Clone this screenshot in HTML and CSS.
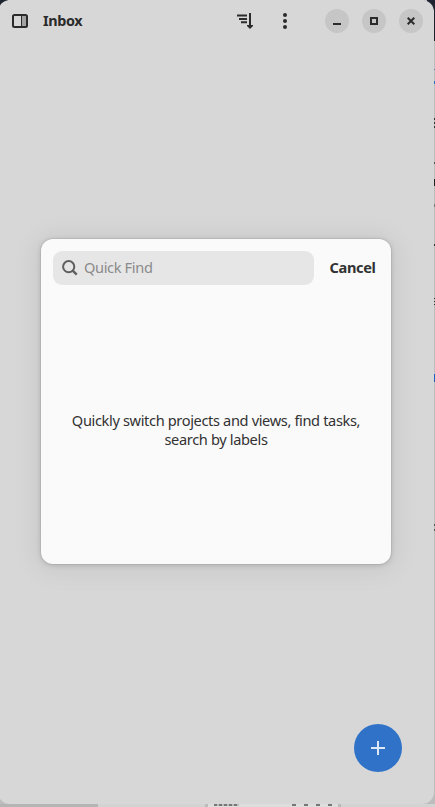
FILE: index.html
```
<!DOCTYPE html>
<html lang="en">
  <head>
    <title>Inbox</title>
    <meta charset="UTF-8">
    <meta name="viewport" content="width=device-width, initial-scale=1.0">
    <link rel="stylesheet" href="styles.css">
  </head>

  <body>
    <div class="window">
      <header class="headerbar">
        <button class="icon-button" aria-label="Toggle sidebar">
          <svg width="16" height="14" viewBox="0 0 16 14">
            <path d="M10 1h5v12h-5z" fill="#a3a3a3"/>
            <rect x="1" y="1" width="14" height="12" rx="1.5" fill="none" stroke="#2b2b2b" stroke-width="2"/>
            <path d="M9.5 1v12" stroke="#2b2b2b"/>
          </svg>
        </button>
        <h1 class="title">Inbox</h1>
        <button class="icon-button sort" aria-label="Sort">
          <svg width="16" height="16" viewBox="0 0 16 16">
            <path d="M0 2.5h10M2 6h8M4 9.200h6" fill="none" stroke="#2b2b2b" stroke-width="2"/>
            <path d="M13 0v13" stroke="#2b2b2b" stroke-width="2"/>
            <path d="M10 12h6v1l-3 3-3-3z" fill="#2b2b2b"/>
          </svg>
        </button>
        <button class="icon-button menu" aria-label="Menu">
          <svg width="4" height="16" viewBox="0 0 4 16" fill="#2b2b2b">
            <circle cx="2" cy="2" r="2"/>
            <circle cx="2" cy="8" r="2"/>
            <circle cx="2" cy="14" r="2"/>
          </svg>
        </button>
        <div class="controls">
          <button class="control" aria-label="Minimize">
            <svg width="8" height="8" viewBox="0 0 8 8"><path d="M0 7h8" stroke="#2b2b2b" stroke-width="2"/></svg>
          </button>
          <button class="control" aria-label="Maximize">
            <svg width="8" height="8" viewBox="0 0 8 8"><path d="M1 1h6v6H1z" fill="none" stroke="#2b2b2b" stroke-width="2"/></svg>
          </button>
          <button class="control" aria-label="Close">
            <svg width="8" height="8" viewBox="0 0 8 8"><path d="M.7.7l6.600 6.600M7.300.7L.7 7.300" stroke="#2b2b2b" stroke-width="2"/></svg>
          </button>
        </div>
      </header>

      <main class="content">
        <div class="dialog">
          <div class="search-row">
            <div class="search">
              <svg width="16" height="16" viewBox="0 0 16 16" fill="none" stroke="#5f5f5f" stroke-width="2">
                <circle cx="6.700" cy="6.700" r="5.600"/>
                <path d="M10.700 10.700l4 4" stroke-width="2.400"/>
              </svg>
              <span class="placeholder">Quick Find</span>
            </div>
            <button class="cancel">Cancel</button>
          </div>
          <p class="hint">Quickly switch projects and views, find tasks,<br>search by labels</p>
        </div>
      </main>

      <footer class="footer">
        <button class="add" aria-label="Add task">
          <svg width="14" height="14" viewBox="0 0 14 14"><path d="M7 0v14M0 7h14" stroke="#dce8f6" stroke-width="2"/></svg>
        </button>
      </footer>
    </div>
    <div class="backdrop">
      <span class="strip"></span>
      <span class="sheet"></span>
    </div>
  </body>
</html>
```

FILE: styles.css
```
* {
  box-sizing: border-box;
}

body {
  margin: 0;
  width: 435px;
  height: 807px;
  overflow: hidden;
  font-family: "Noto Sans", "Open Sans", sans-serif;
  font-size: 14.6px;
  letter-spacing: -0.36px;
  color: #323232;
  /* bits of the windows behind, seen along the right edge */
  background:
    linear-gradient(#1d2430, #1d2430) right 0 / 8px 41px no-repeat,
    linear-gradient(#5585bd, #5585bd) right 69px / 1px 1px no-repeat,
    linear-gradient(#2a6fc0, #2a6fc0) right 81px / 1px 3px no-repeat,
    repeating-linear-gradient(#333 0 2px, #bbb 2px 4px) right 118px / 1px 11px no-repeat,
    linear-gradient(#555, #555) right 162px / 1px 2px no-repeat,
    linear-gradient(#222, #222) right 179px / 1px 7px no-repeat,
    linear-gradient(#777, #777) right 204px / 1px 3px no-repeat,
    linear-gradient(#333, #333) right 244px / 1px 2px no-repeat,
    repeating-linear-gradient(#333 0 1px, #bbb 1px 3px) right 298px / 1px 9px no-repeat,
    linear-gradient(#1763b8, #1763b8) right 374px / 1px 8px no-repeat,
    repeating-linear-gradient(#555 0 2px, #bbb 2px 5px) right 524px / 1px 7px no-repeat,
    linear-gradient(#1d2430, #1d2430) 0 0 / 8px 8px no-repeat,
    #bdbdbd;
}

button {
  display: flex;
  align-items: center;
  justify-content: center;
  padding: 0;
  border: none;
  background: none;
  font: inherit;
  letter-spacing: inherit;
  color: inherit;
}

svg {
  display: block;
}

.window {
  display: flex;
  flex-direction: column;
  width: 436px;
  height: 804px;
  margin-left: -2px;
  border-radius: 12px;
  background-color: #d7d7d7;
}

.headerbar {
  display: flex;
  align-items: center;
  height: 42px;
  padding: 0 11px 0 14px;
}

.title {
  flex: 1;
  margin: 0 0 0 15px;
  padding-bottom: 2px;
  font-size: 14.4px;
  font-weight: 700;
  color: #2b2b2b;
}

.menu {
  margin-left: 30px;
}

.controls {
  display: flex;
  gap: 13px;
  margin-left: 38px;
}

.control {
  width: 24px;
  height: 24px;
  border-radius: 50%;
  background-color: #c6c6c6;
}

.content {
  padding: 197px 0 0 43px;
}

.dialog {
  display: flex;
  flex-direction: column;
  width: 350px;
  height: 325px;
  padding: 12px;
  border-radius: 12px;
  background-color: #fafafa;
  box-shadow: 0 0 0 1px rgba(0, 0, 0, 0.06), 0 1px 5px 1px rgba(0, 0, 0, 0.12), 0 2px 26px 6px rgba(0, 0, 0, 0.06);
}

.search-row {
  display: flex;
}

.search {
  display: flex;
  align-items: center;
  width: 261px;
  height: 34px;
  padding-left: 9px;
  border-radius: 9px;
  background-color: #e6e6e6;
}

.placeholder {
  margin-left: 6px;
  padding-bottom: 2px;
  color: #8b8b8b;
}

.cancel {
  flex: 1;
  margin-left: 12px;
  padding-bottom: 2px;
  font-weight: 700;
}

.hint {
  margin: 126px 0 0;
  line-height: 19px;
  text-align: center;
}

.footer {
  display: flex;
  justify-content: flex-end;
  margin-top: auto;
  padding: 0 32px 32px 0;
}

.add {
  width: 48px;
  height: 48px;
  border-radius: 50%;
  background-color: #3072c8;
}

.backdrop {
  display: flex;
  height: 3px;
  background-color: #d3d3d3;
}

.strip {
  width: 98px;
  background-color: #b5b5b5;
}

/* top of a window below this one, with the tips of its title and icons */
.sheet {
  width: 136px;
  margin-left: 107px;
  border: solid #bbb;
  border-width: 0 3px;
  background:
    repeating-linear-gradient(90deg, #777 0 3px, #bbb 3px 5px) 6px 0 / 25px 2px no-repeat,
    repeating-linear-gradient(90deg, #777 0 4px, transparent 4px 12px) 84px 0 / 42px 2px no-repeat,
    #dedede;
}
```
